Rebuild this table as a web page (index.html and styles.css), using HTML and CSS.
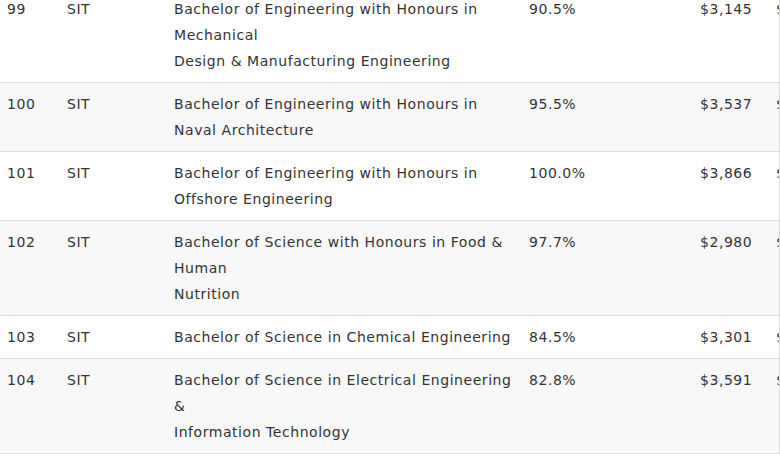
FILE: index.html
```html
<!DOCTYPE html>
<html lang="en">
<head>
    <meta charset="UTF-8">
    <meta name="viewport" content="width=device-width, initial-scale=1.0">
    <title>Course Fees</title>
    <link rel="stylesheet" href="styles.css">
</head>
<body>

    <!-- Fees table (scrolled part) -->
    <div class="table-wrap">
        <table class="fees">
            <tr>
                <td class="col-no">99</td>
                <td class="col-uni">SIT</td>
                <td class="col-course">Bachelor of Engineering with Honours in Mechanical<br>Design &amp; Manufacturing Engineering</td>
                <td class="col-rate">90.5%</td>
                <td class="col-fee">$3,145</td>
                <td class="col-more">$3,145</td>
            </tr>
            <tr>
                <td class="col-no">100</td>
                <td class="col-uni">SIT</td>
                <td class="col-course">Bachelor of Engineering with Honours in Naval Architecture</td>
                <td class="col-rate">95.5%</td>
                <td class="col-fee">$3,537</td>
                <td class="col-more">$3,537</td>
            </tr>
            <tr>
                <td class="col-no">101</td>
                <td class="col-uni">SIT</td>
                <td class="col-course">Bachelor of Engineering with Honours in Offshore Engineering</td>
                <td class="col-rate">100.0%</td>
                <td class="col-fee">$3,866</td>
                <td class="col-more">$3,866</td>
            </tr>
            <tr>
                <td class="col-no">102</td>
                <td class="col-uni">SIT</td>
                <td class="col-course">Bachelor of Science with Honours in Food &amp; Human<br>Nutrition</td>
                <td class="col-rate">97.7%</td>
                <td class="col-fee">$2,980</td>
                <td class="col-more">$2,980</td>
            </tr>
            <tr>
                <td class="col-no">103</td>
                <td class="col-uni">SIT</td>
                <td class="col-course">Bachelor of Science in Chemical Engineering</td>
                <td class="col-rate">84.5%</td>
                <td class="col-fee">$3,301</td>
                <td class="col-more">$3,301</td>
            </tr>
            <tr>
                <td class="col-no">104</td>
                <td class="col-uni">SIT</td>
                <td class="col-course">Bachelor of Science in Electrical Engineering &amp;<br>Information Technology</td>
                <td class="col-rate">82.8%</td>
                <td class="col-fee">$3,591</td>
                <td class="col-more">$3,591</td>
            </tr>
        </table>
    </div>

</body>
</html>
```

FILE: styles.css
```css
body {
    margin: 0;
    background: #fff;
    font-family: "DejaVu Sans", Verdana, sans-serif;
    font-size: 14px;
    letter-spacing: 0.55px;
    color: #333;
    overflow: hidden;
}

/* Table wrapper, cut at the right edge */
.table-wrap {
    width: 779px;
    height: 454px;
    overflow: hidden;
    border-right: 1px solid #ddd;
}

.fees {
    border-collapse: collapse;
    table-layout: fixed;
    width: 860px;
    margin-top: -12px;
    margin-left: -1px;
}

.fees td {
    padding: 8px;
    line-height: 26px;
    vertical-align: top;
    text-align: left;
    border-bottom: 1px solid #ddd;
}

.fees tr:nth-child(even) td {
    background: #f8f8f8;
}

.col-no { width: 44px; }
.col-uni { width: 91px; }
.col-course { width: 339px; }
.col-rate { width: 155px; }
.col-fee { width: 60px; }
.col-more { width: 80px; }
```
